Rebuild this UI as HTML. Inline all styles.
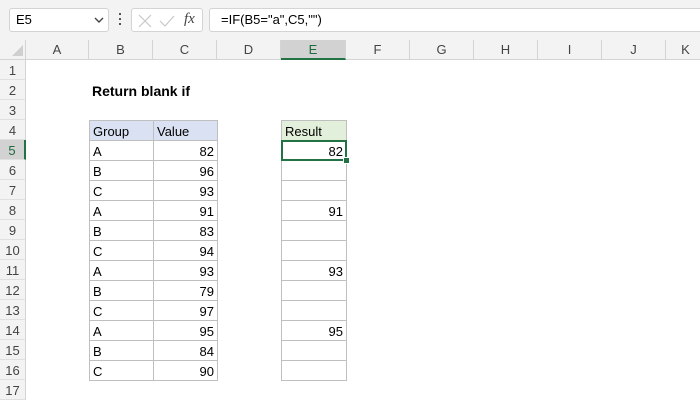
<!DOCTYPE html><html><head><style>
body{margin:0;width:700px;height:400px;overflow:hidden;background:#fff;font-family:"Liberation Sans",Arial,sans-serif;position:relative}
.a{position:absolute}
.top{left:0;top:0;width:700px;height:40px;background:#f3f3f3}
.box{background:#fff;border:1px solid #d4d4d4;border-radius:3px;box-sizing:border-box}
.ch{top:40px;height:20px;background:#f3f3f3;border-right:1px solid #d4d4d4;box-sizing:border-box;font-size:13px;color:#444;text-align:center;line-height:20px;border-bottom:1px solid #d4d4d4}
.rh{left:0;width:26px;height:20px;background:#f3f3f3;border-right:1px solid #d4d4d4;border-bottom:1px solid #e0e0e0;box-sizing:border-box;font-size:13px;color:#444;text-align:center;line-height:21px}
table{border-collapse:collapse;position:absolute;font-size:13px}
td{border:1px solid #bfbfbf;height:20px;padding:0 3px;box-sizing:border-box;line-height:16px;vertical-align:bottom}
.r{text-align:right}
</style></head><body>
<div class="a top"></div>
<div class="a box" style="left:9px;top:8px;width:100px;height:24px;font-size:13px;line-height:22px;padding-left:6px">E5
<svg class="a" style="left:84px;top:8px" width="10" height="7"><path d="M1 1l4 4 4-4" stroke="#444" stroke-width="1.4" fill="none"/></svg></div>
<div class="a" style="left:119px;top:13px;width:2px;height:2px;background:#555;box-shadow:0 5px #555,0 10px #555"></div>
<div class="a box" style="left:131px;top:8px;width:72px;height:24px">
<svg class="a" style="left:6px;top:5px" width="14" height="14"><path d="M1 1l12 12M13 1L1 13" stroke="#c8c8c8" stroke-width="1.2"/></svg>
<svg class="a" style="left:27px;top:5px" width="16" height="14"><path d="M1 7l5 5 9-10" stroke="#c8c8c8" stroke-width="1.2" fill="none"/></svg>
<span class="a" style="left:52px;top:2px;font-family:'Liberation Serif',serif;font-style:italic;font-size:15px;color:#444">fx</span></div>
<div class="a box" style="left:209px;top:8px;width:500px;height:24px;font-size:13px;line-height:22px;padding-left:11px">=IF(B5="a",C5,"")</div>
<div class="a" style="left:0;top:40px;width:26px;height:20px;background:#f3f3f3;border-right:1px solid #d4d4d4;border-bottom:1px solid #d4d4d4;box-sizing:border-box"><svg class="a" style="left:12px;top:5px" width="11" height="11"><path d="M11 0V11H0z" fill="#d0d0d0"/></svg></div>
<div class="a ch" style="left:26px;width:63px">A</div>
<div class="a ch" style="left:89px;width:64px">B</div>
<div class="a ch" style="left:153px;width:64px">C</div>
<div class="a ch" style="left:217px;width:64px">D</div>
<div class="a ch" style="left:281px;width:65px;background:#d2d2d2;border-bottom:2px solid #217346;color:#1e6b3c">E</div>
<div class="a ch" style="left:346px;width:64px">F</div>
<div class="a ch" style="left:410px;width:64px">G</div>
<div class="a ch" style="left:474px;width:64px">H</div>
<div class="a ch" style="left:538px;width:64px">I</div>
<div class="a ch" style="left:602px;width:64px">J</div>
<div class="a ch" style="left:666px;width:40px">K</div>
<div class="a rh" style="top:60px">1</div><div class="a rh" style="top:80px">2</div><div class="a rh" style="top:100px">3</div><div class="a rh" style="top:120px">4</div>
<div class="a rh" style="top:140px;background:#d2d2d2;border-right:2px solid #217346;color:#1e6b3c">5</div>
<div class="a rh" style="top:160px">6</div><div class="a rh" style="top:180px">7</div><div class="a rh" style="top:200px">8</div><div class="a rh" style="top:220px">9</div><div class="a rh" style="top:240px">10</div><div class="a rh" style="top:260px">11</div><div class="a rh" style="top:280px">12</div><div class="a rh" style="top:300px">13</div><div class="a rh" style="top:320px">14</div><div class="a rh" style="top:340px">15</div><div class="a rh" style="top:360px">16</div><div class="a rh" style="top:380px">17</div>
<div class="a" style="left:92px;top:82px;font-size:14px;font-weight:bold;line-height:18px">Return blank if</div>
<table style="left:89px;top:120px;width:129px">
<tr style="background:#d9e1f2"><td style="width:64px">Group</td><td>Value</td></tr>
<tr><td>A</td><td class="r">82</td></tr><tr><td>B</td><td class="r">96</td></tr><tr><td>C</td><td class="r">93</td></tr>
<tr><td>A</td><td class="r">91</td></tr><tr><td>B</td><td class="r">83</td></tr><tr><td>C</td><td class="r">94</td></tr>
<tr><td>A</td><td class="r">93</td></tr><tr><td>B</td><td class="r">79</td></tr><tr><td>C</td><td class="r">97</td></tr>
<tr><td>A</td><td class="r">95</td></tr><tr><td>B</td><td class="r">84</td></tr><tr><td>C</td><td class="r">90</td></tr>
</table>
<table style="left:281px;top:120px;width:66px">
<tr style="background:#e2efda"><td>Result</td></tr>
<tr><td class="r">82</td></tr><tr><td>&nbsp;</td></tr><tr><td>&nbsp;</td></tr>
<tr><td class="r">91</td></tr><tr><td>&nbsp;</td></tr><tr><td>&nbsp;</td></tr>
<tr><td class="r">93</td></tr><tr><td>&nbsp;</td></tr><tr><td>&nbsp;</td></tr>
<tr><td class="r">95</td></tr><tr><td>&nbsp;</td></tr><tr><td>&nbsp;</td></tr>
</table>
<div class="a" style="left:281px;top:140px;width:66px;height:21px;border:2px solid #217346;box-sizing:border-box"></div>
<div class="a" style="left:343px;top:157px;width:5px;height:5px;background:#217346;border:1px solid #fff"></div>
</body></html>
